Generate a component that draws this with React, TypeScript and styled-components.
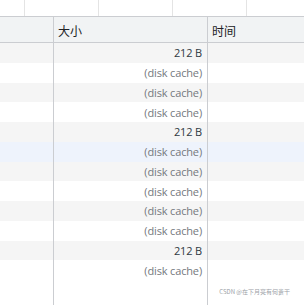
import React from "react";
import styled, { createGlobalStyle } from "styled-components";

const GlobalStyle = createGlobalStyle`
  html, body {
    margin: 0;
    padding: 0;
    background: #ffffff;
  }
  body {
    font-family: "Open Sans", "Noto Sans", "Noto Sans CJK SC", sans-serif;
  }
  * {
    box-sizing: border-box;
  }
`;

const Page = styled.div`
  position: relative;
  width: 304px;
  height: 305px;
  overflow: hidden;
  display: flex;
  flex-direction: column;
  background: #ffffff;
`;

const Overview = styled.div`
  display: flex;
  height: 17px;
  padding-left: 24px;
  border-bottom: 1px solid #cbcdd1;
  flex-shrink: 0;
`;

const Tick = styled.div`
  width: 74px;
  flex-shrink: 0;
  border-left: 1px solid #e4e4e4;
`;

const Grid = styled.div`
  display: grid;
  grid-template-columns: 54px 154px 1fr;
`;

const HeaderRow = styled(Grid)`
  height: 26px;
  background: #f1f3f4;
  border-bottom: 1px solid #cbcdd1;
  flex-shrink: 0;
`;

const HeaderCell = styled.div<{ $last?: boolean }>`
  display: flex;
  align-items: center;
  padding-left: 4px;
  padding-top: 1px;
  border-right: ${(p) => (p.$last ? "none" : "1px solid #cbcdd1")};
  font-family: "Noto Sans CJK SC", sans-serif;
  font-size: 12px;
  color: #202124;
`;

const Row = styled(Grid)<{ $tone: "odd" | "even" | "hover" }>`
  height: 19.75px;
  flex-shrink: 0;
  background: ${(p) =>
    p.$tone === "hover" ? "#eef3fc" : p.$tone === "odd" ? "#f5f5f5" : "#ffffff"};
`;

const Cell = styled.div<{ $last?: boolean; $muted?: boolean }>`
  display: flex;
  align-items: center;
  justify-content: flex-end;
  padding-right: 5px;
  border-right: ${(p) => (p.$last ? "none" : "1px solid #cbcdd1")};
  font-size: 11px;
  letter-spacing: -0.15px;
  color: ${(p) => (p.$muted ? "#74787d" : "#303942")};
  white-space: nowrap;
`;

const Filler = styled(Grid)`
  flex: 1;
`;

const Watermark = styled.div`
  position: absolute;
  right: 14px;
  bottom: 9px;
  font-family: "Noto Sans CJK SC", sans-serif;
  font-size: 6px;
  color: #9aa0a6;
`;

const sizes = [
  "212 B",
  "(disk cache)",
  "(disk cache)",
  "(disk cache)",
  "212 B",
  "(disk cache)",
  "(disk cache)",
  "(disk cache)",
  "(disk cache)",
  "(disk cache)",
  "212 B",
  "(disk cache)",
];

export default function App() {
  return (
    <Page>
      <GlobalStyle />
      <Overview>
        {[0, 1, 2, 3].map((i) => (
          <Tick key={i} />
        ))}
      </Overview>
      <HeaderRow>
        <HeaderCell />
        <HeaderCell>大小</HeaderCell>
        <HeaderCell $last>时间</HeaderCell>
      </HeaderRow>
      {sizes.map((s, i) => (
        <Row key={i} $tone={i === 5 ? "hover" : i % 2 === 0 ? "odd" : "even"}>
          <Cell />
          <Cell $muted={s.startsWith("(")}>{s}</Cell>
          <Cell $last />
        </Row>
      ))}
      <Filler>
        <Cell />
        <Cell />
        <Cell $last />
      </Filler>
      <Watermark>CSDN @在下月亮有何贵干</Watermark>
    </Page>
  );
}
